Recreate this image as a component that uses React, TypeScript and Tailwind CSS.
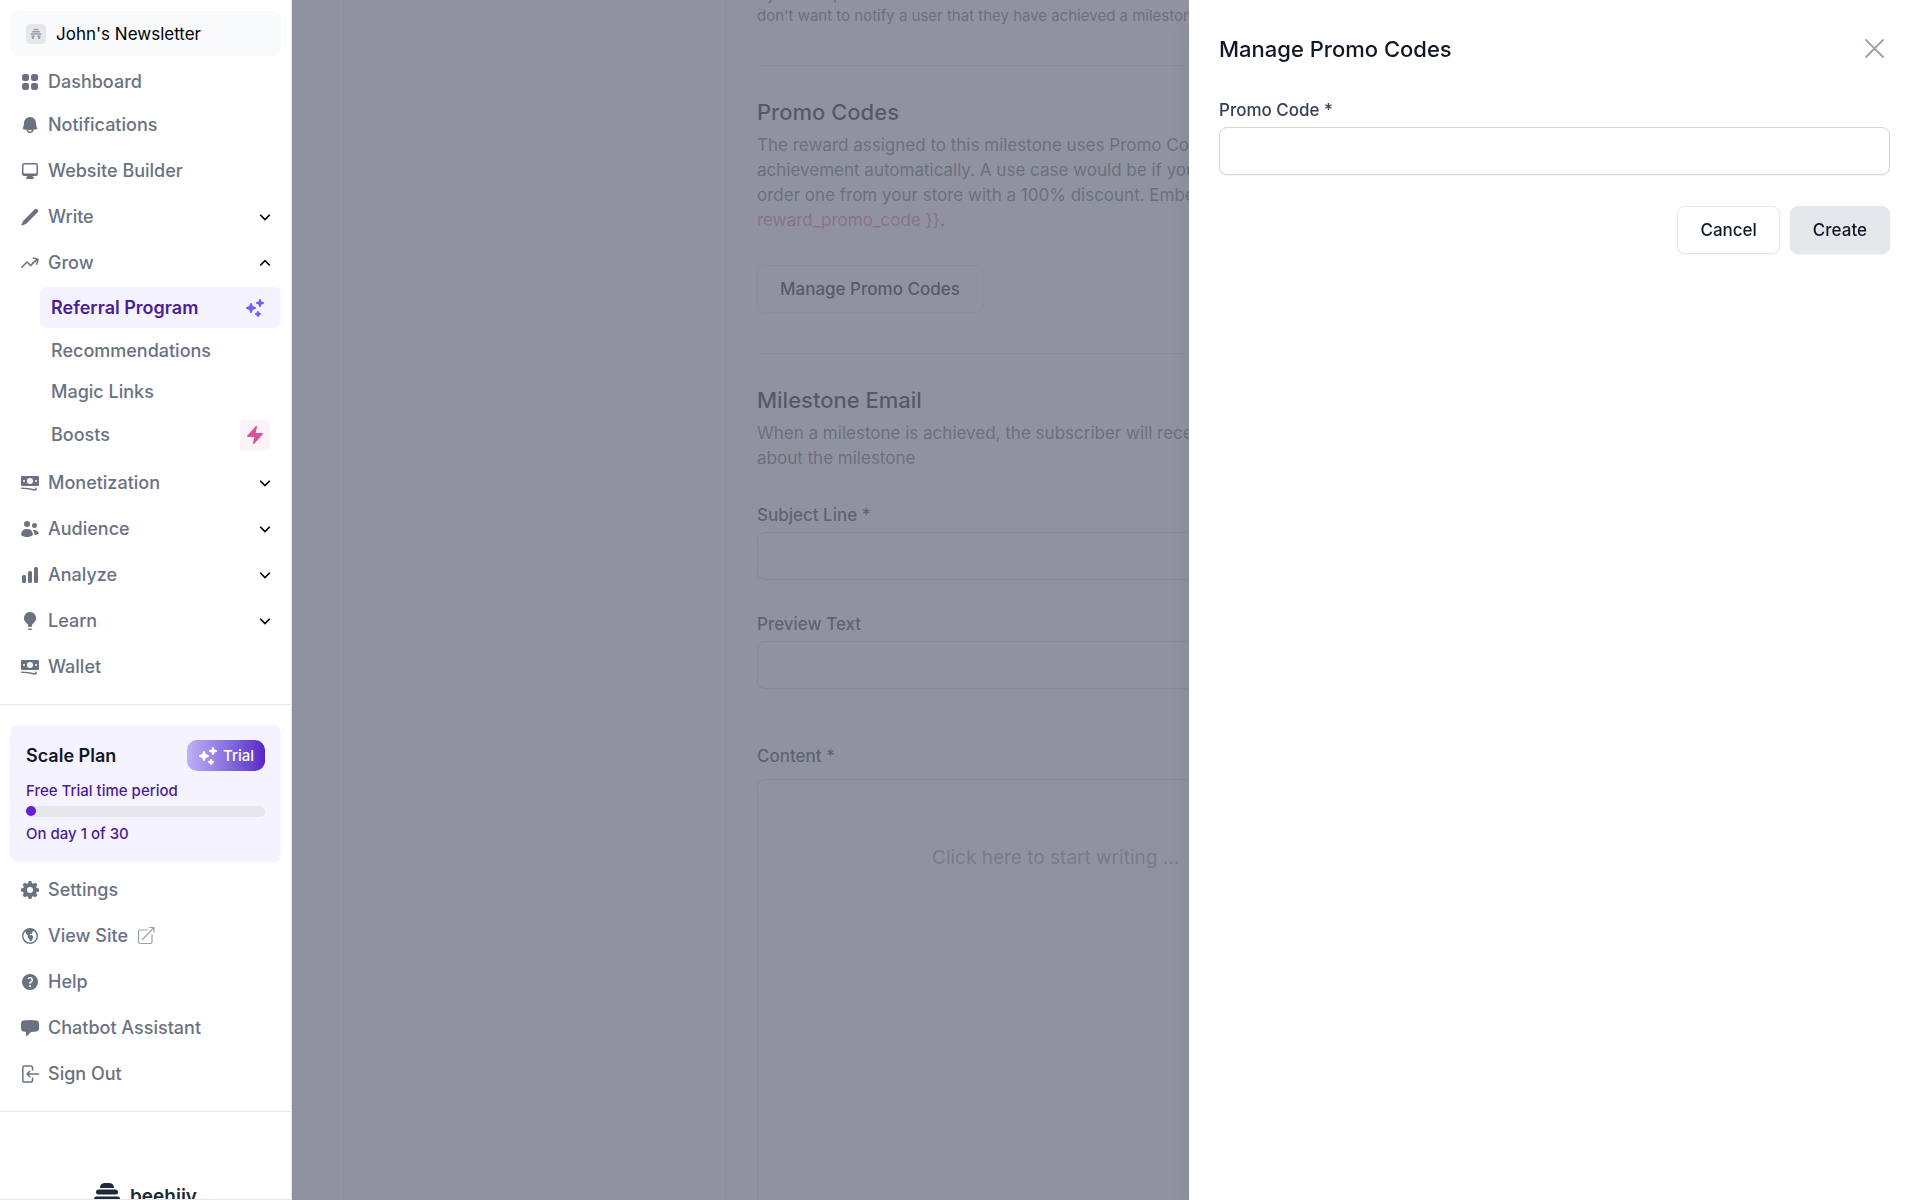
import type { FC, ReactNode } from 'react';
import type { IconType } from 'react-icons';
import {
  HiMiniArrowTrendingUp,
  HiMiniBanknotes,
  HiMiniBell,
  HiMiniBolt,
  HiMiniChartBar,
  HiMiniChatBubbleLeft,
  HiMiniCog8Tooth,
  HiMiniComputerDesktop,
  HiMiniGlobeAmericas,
  HiMiniLightBulb,
  HiMiniPencil,
  HiMiniQuestionMarkCircle,
  HiMiniSparkles,
  HiMiniSquares2X2,
  HiMiniUsers,
} from 'react-icons/hi2';

const SignOutIcon = ({ className }: { className?: string }) => (
  <svg viewBox="0 0 20 20" fill="none" stroke="currentColor" strokeWidth="1.5" strokeLinecap="round" strokeLinejoin="round" className={className}>
    <path d="M12.5 6V3.8A1.8 1.8 0 0 0 10.7 2H4.6a1.8 1.8 0 0 0-1.8 1.8v12.4A1.8 1.8 0 0 0 4.6 18h6.1a1.8 1.8 0 0 0 1.8-1.8V14M18.5 10H7M9.8 7.2 7 10l2.8 2.8" />
  </svg>
);

const ExternalIcon = () => (
  <svg viewBox="0 0 20 20" fill="none" stroke="currentColor" strokeWidth="1.2" strokeLinecap="round" strokeLinejoin="round" className="size-5 text-gray-400">
    <path d="M11.5 4H4a1.5 1.5 0 0 0-1.5 1.5V16A1.5 1.5 0 0 0 4 17.5h10.5A1.5 1.5 0 0 0 16 16V8.5M6.5 13.5 18 1.5M13.5 1.5H18V6" />
  </svg>
);

const Chevron = ({ up = false }: { up?: boolean }) => (
  <svg viewBox="0 0 12 12" fill="none" stroke="currentColor" strokeWidth="1.6" className="size-3 text-black">
    <path d={up ? 'M1.2 8.5 6 3.7l4.8 4.8' : 'M1.2 3.7 6 8.5l4.8-4.8'} />
  </svg>
);

const HiveLogo = () => (
  <svg viewBox="0 0 26 28" fill="currentColor" className="h-7 w-[26px]">
    <path d="M10.5 0h5A4.5 4.5 0 0 1 20 5H6a4.5 4.5 0 0 1 4.5-5Z" />
    <rect x="2" y="6.5" width="22" height="5" rx="2.5" />
    <rect x="0" y="13.5" width="26" height="5" rx="2.5" />
    <path d="M2.5 20.5h21a2.5 2.5 0 0 1 0 5H18a5 5 0 0 0-10 0H2.5a2.5 2.5 0 0 1 0-5Z" />
  </svg>
);

const WorkspaceIcon = () => (
  <span className="flex size-5 items-center justify-center rounded bg-gray-200 text-gray-400">
    <svg viewBox="0 0 12 12" fill="currentColor" className="size-3">
      <path d="M4 .8h4l.7 1.4H3.3ZM2.4 3h7.2l.7 1.5H1.7ZM.8 5.3h10.4v1.5H.8ZM1.6 7.6h3v1.3h-.7V11H1.8V8.9h-.2ZM7.4 7.6h3v1.3h-.2V11H8.1V8.9h-.7Z" />
    </svg>
  </span>
);

interface NavItemProps {
  icon: IconType | typeof SignOutIcon;
  label: string;
  chevron?: 'up' | 'down';
  compact?: boolean;
  children?: ReactNode;
}

const NavItem: FC<NavItemProps> = ({ icon: Icon, label, chevron, compact, children }) => {
  const row = `flex w-full items-center gap-2 px-2.5 text-lg/6 font-medium text-gray-500 ${compact ? 'h-10' : 'h-[46px]'}`;
  if (chevron) {
    return (
      <button type="button" aria-expanded={chevron === 'up'} className={row}>
        <Icon className="size-5 shrink-0" />
        <span className="flex-1 text-left">{label}</span>
        <Chevron up={chevron === 'up'} />
      </button>
    );
  }
  return (
    <a href="#" className={row}>
      <Icon className="size-5 shrink-0" />
      <span>{label}</span>
      {children}
    </a>
  );
};

const SubItem: FC<{ label: string }> = ({ label }) => (
  <a href="#" className="flex h-[41px] items-center px-[11px] text-gray-500">
    {label}
  </a>
);

const PlanCard = () => (
  <section className="mx-2.5 mt-5 rounded-lg bg-[#f5f3ff] px-4 pt-[15px] pb-4 text-[#4c1d95]">
    <div className="flex items-center justify-between">
      <h2 className="text-lg/6 font-semibold text-gray-900">Scale Plan</h2>
      <span className="flex h-[31px] items-center gap-[5px] rounded-[10px] bg-linear-to-r from-[#c0b0f5] to-[#5b21c8] px-[11px] text-[15px]/6 font-medium text-white">
        <HiMiniSparkles className="size-5" />
        Trial
      </span>
    </div>
    <p className="mt-2 text-[15px]/6 font-medium">Free Trial time period</p>
    <div className="mt-[3px] h-[11px] rounded-full bg-gray-200">
      <div className="size-[10px] rounded-full bg-[#6423cf]" />
    </div>
    <p className="mt-[5px] text-[15px]/6 font-medium">On day 1 of 30</p>
  </section>
);

const Sidebar = () => (
  <aside className="flex w-[292px] shrink-0 flex-col overflow-hidden border-r border-gray-200 bg-white">
    <button type="button" className="mx-2.5 mt-[11px] mb-1.5 flex h-[45px] shrink-0 items-center gap-2.5 rounded-lg bg-gray-50 px-4 text-[17px]/6 text-black">
      <WorkspaceIcon />
      John's Newsletter
    </button>
    <nav className="px-2.5">
      <NavItem icon={HiMiniSquares2X2} label="Dashboard" compact />
      <NavItem icon={HiMiniBell} label="Notifications" />
      <NavItem icon={HiMiniComputerDesktop} label="Website Builder" />
      <NavItem icon={HiMiniPencil} label="Write" chevron="down" />
      <NavItem icon={HiMiniArrowTrendingUp} label="Grow" chevron="up" />
      <div className="mt-px mb-[3px] ml-[30px] text-lg/6 font-medium">
        <a href="#" className="mb-0.5 flex h-[41px] items-center justify-between rounded-md bg-[#f5f3ff] pr-4 pl-[11px] font-semibold text-[#4c1d95]">
          Referral Program
          <HiMiniSparkles className="size-5 text-[#7c5cf0]" />
        </a>
        <SubItem label="Recommendations" />
        <SubItem label="Magic Links" />
        <a href="#" className="flex h-[45px] items-center justify-between px-[11px] text-gray-500">
          Boosts
          <span className="flex size-[30px] items-center justify-center rounded bg-pink-50">
            <HiMiniBolt className="size-5 text-[#db5296]" />
          </span>
        </a>
      </div>
      <NavItem icon={HiMiniBanknotes} label="Monetization" chevron="down" />
      <NavItem icon={HiMiniUsers} label="Audience" chevron="down" />
      <NavItem icon={HiMiniChartBar} label="Analyze" chevron="down" />
      <NavItem icon={HiMiniLightBulb} label="Learn" chevron="down" />
      <NavItem icon={HiMiniBanknotes} label="Wallet" />
    </nav>
    <hr className="mt-3.5 border-gray-200" />
    <PlanCard />
    <nav className="mt-[5px] px-2.5">
      <NavItem icon={HiMiniCog8Tooth} label="Settings" />
      <NavItem icon={HiMiniGlobeAmericas} label="View Site">
        <ExternalIcon />
      </NavItem>
      <NavItem icon={HiMiniQuestionMarkCircle} label="Help" />
      <NavItem icon={HiMiniChatBubbleLeft} label="Chatbot Assistant" />
      <NavItem icon={SignOutIcon} label="Sign Out" />
    </nav>
    <hr className="mt-3.5 border-gray-200" />
    <footer className="flex min-h-0 flex-1 items-start justify-center gap-2.5 overflow-hidden border-b border-gray-200 pt-[71px] text-gray-800">
      <HiveLogo />
      <span className="text-[19px]/7 font-semibold">beehiiv</span>
    </footer>
  </aside>
);

interface FieldProps {
  id: string;
  label: string;
}

const Field: FC<FieldProps> = ({ id, label }) => (
  <div className="flex flex-col gap-[5px]">
    <label htmlFor={id} className="text-[17px]/6 font-medium text-gray-700">
      {label}
    </label>
    <input id={id} type="text" className="h-12 w-full rounded-lg border border-gray-300 bg-white px-4 text-[17px] shadow-xs" />
  </div>
);

const MilestonePage = () => (
  <main className="relative flex min-w-0 flex-1 overflow-hidden bg-white pl-[51px]">
    <div className="w-[382px] shrink-0 border-l border-gray-200" />
    <div className="-mt-4 flex-1 border-l border-gray-200 px-[31px]">
      <p className="w-[800px] text-[15px]/[21px] text-gray-500">
        By default points
        <br />
        don't want to notify a user that they have achieved a milestone.
      </p>
      <hr className="mt-[39px] border-gray-200" />

      <section className="pt-8 pb-10">
        <h2 className="text-[22px]/7 font-medium text-gray-900">Promo Codes</h2>
        <p className="mt-[7px] w-[840px] text-[17px]/[25px] text-gray-500">
          The reward assigned to this milestone uses Promo Codes to fulfill the
          <br />
          achievement automatically. A use case would be if you want them to
          <br />
          order one from your store with a 100% discount. Embed the code with
          <br />
          <span className="text-[#e07aa8]">reward_promo_code {'}}'}</span>.
        </p>
        <button type="button" className="mt-8 h-12 rounded-lg border border-gray-200 bg-white px-[22px] text-[17px]/6 font-medium text-gray-900 shadow-xs">
          Manage Promo Codes
        </button>
      </section>
      <hr className="border-gray-200" />

      <section className="pt-8">
        <h2 className="text-[22px]/7 font-medium text-gray-900">Milestone Email</h2>
        <p className="mt-[7px] mb-8 w-[840px] text-[17px]/[25px] text-gray-500">
          When a milestone is achieved, the subscriber will receive an email
          <br />
          about the milestone
        </p>
        <div className="flex flex-col gap-8">
          <Field id="subject" label="Subject Line *" />
          <Field id="preview" label="Preview Text" />
        </div>
        <label htmlFor="content" className="mt-[55px] block text-[17px]/6 font-medium text-gray-700">
          Content *
        </label>
        <textarea
          id="content"
          placeholder="Click here to start writing ..."
          className="mt-[11px] block h-[600px] w-full resize-none rounded-lg border border-gray-300 bg-white px-[174px] pt-16 text-[19px]/7 placeholder:text-gray-400"
        />
      </section>
    </div>
    <div className="absolute inset-0 bg-[#6b6f7f]/75" />
  </main>
);

const PromoDrawer = () => (
  <div role="dialog" aria-labelledby="drawer-title" className="fixed inset-y-0 right-0 w-[731px] bg-white px-[30px] pt-[35px] shadow-xl">
    <header className="mb-[35px] flex items-center justify-between">
      <h2 id="drawer-title" className="text-[22px]/7 font-medium text-gray-900">
        Manage Promo Codes
      </h2>
      <button type="button" aria-label="Close" className="text-gray-400">
        <svg viewBox="0 0 30 28" fill="none" stroke="currentColor" strokeWidth="1.8" strokeLinecap="round" className="h-7 w-[30px]">
          <path d="m6 5 17 17M23 5 6 22" />
        </svg>
      </button>
    </header>
    <Field id="promo-code" label="Promo Code *" />
    <div className="mt-[31px] flex justify-end gap-2.5">
      <button type="button" className="h-12 rounded-lg border border-gray-200 bg-white px-[22px] text-[17px]/6 font-medium text-gray-900 shadow-xs">
        Cancel
      </button>
      <button type="button" className="h-12 rounded-lg border border-gray-200 bg-gray-200 px-[22px] text-[17px]/6 font-medium text-gray-900 shadow-xs">
        Create
      </button>
    </div>
  </div>
);

export default function App() {
  return (
    <div className="flex h-screen overflow-hidden font-['Inter',sans-serif]">
      <Sidebar />
      <MilestonePage />
      <PromoDrawer />
    </div>
  );
}
